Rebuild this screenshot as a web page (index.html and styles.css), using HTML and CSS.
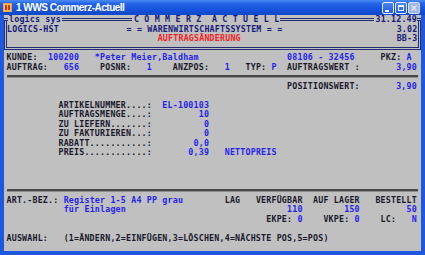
FILE: index.html
```html
<!DOCTYPE html>
<html lang="de">
<head>
  <meta charset="UTF-8" />
  <title>1 WWS Commerz-Actuell</title>
  <link rel="stylesheet" href="styles.css">
</head>
<body>

  <div class="window">

    <!-- Title bar -->
    <div class="titlebar">
      <svg class="app-icon" width="9" height="9" viewBox="0 0 9 9">
        <rect x="0" y="0" width="9" height="9" fill="#f4a43a" />
        <rect x="1" y="1" width="7" height="7" fill="#f6c35a" />
        <rect x="2" y="2" width="2" height="5" fill="#d8321e" />
        <rect x="5" y="2" width="2" height="5" fill="#d8321e" />
      </svg>
      <span class="title">1 WWS Commerz-Actuell</span>
      <div class="win-btns">
        <span class="win-btn">
          <svg width="12" height="12" viewBox="0 0 12 12"><rect x="3" y="8" width="4" height="2" fill="#fff" /></svg>
        </span>
        <span class="win-btn">
          <svg width="12" height="12" viewBox="0 0 12 12"><rect x="3.5" y="3.5" width="5" height="5" fill="none" stroke="#fff" /><rect x="3" y="3" width="6" height="2" fill="#fff" /></svg>
        </span>
        <span class="win-btn disabled">
          <svg width="12" height="12" viewBox="0 0 12 12"><path d="M3.5 3.5 L8.5 8.5 M8.5 3.5 L3.5 8.5" stroke="#e4e8f4" stroke-width="1.4" /></svg>
        </span>
      </div>
    </div>

    <!-- Terminal screen -->
    <div class="client">
      <div class="screen">

        <div class="head">
          <div class="head-top">
            <span class="rule rule-lead"></span>
            <span class="ht-text">logics sys</span>
            <span class="rule rule-mid"></span>
            <span class="ht-text">C O M M E R Z  A C T U E L L</span>
            <span class="rule rule-fill"></span>
            <span class="ht-text">31.12.49</span>
            <span class="rule rule-end"></span>
          </div>
          <div class="row n">LOGICS-HST             = = WARENWIRTSCHAFTSSYSTEM = =                      3.02</div>
          <div class="row n"><span class="r">                             AUFTRAGSÄNDERUNG</span>                              BB-3</div>
        </div>

        <div class="row body">KUNDE:  <span class="v">100200</span>   <span class="v">*Peter Meier,Baldham</span>                 <span class="v">08106 - 32456</span>     PKZ: <span class="v">A</span></div>
        <div class="row body">AUFTRAG:   <span class="v">656</span>    POSNR:   <span class="v">1</span>    ANZPOS:   <span class="v">1</span>   TYP: <span class="v">P</span>  AUFTRAGSWERT :       <span class="v">3,90</span></div>
        <div class="sep"></div>
        <div class="row body">                                                      POSITIONSWERT:       <span class="v">3,90</span></div>
        <div class="row body"></div>
        <div class="row body">          ARTIKELNUMMER....:  <span class="v">EL-100103</span></div>
        <div class="row body">          AUFTRAGSMENGE....:         <span class="v">10</span></div>
        <div class="row body">          ZU LIEFERN.......:          <span class="v">0</span></div>
        <div class="row body">          ZU FAKTURIEREN...:          <span class="v">0</span></div>
        <div class="row body">          RABATT...........:        <span class="v">0,0</span></div>
        <div class="row body">          PREIS............:       <span class="v">0,39</span>   <span class="v">NETTOPREIS</span></div>
        <div class="row body"></div>
        <div class="row body"></div>
        <div class="row body"></div>
        <div class="sep"></div>
        <div class="row body">ART.-BEZ.: <span class="v">Register 1-5 A4 PP grau</span>        LAG   VERFÜGBAR  AUF LAGER   BESTELLT</div>
        <div class="row body">           <span class="v">für Einlagen</span>                               <span class="v">110</span>        <span class="v">150</span>         <span class="v">50</span></div>
        <div class="row body">                                                  EKPE: <span class="v">0</span>    VKPE: <span class="v">0</span>    LC:   <span class="v">N</span></div>
        <div class="row body"></div>
        <div class="row body">AUSWAHL:   (1=ÄNDERN,2=EINFÜGEN,3=LÖSCHEN,4=NÄCHSTE POS,5=POS)</div>

      </div>
    </div>

  </div>

</body>
</html>
```

FILE: styles.css
```css
body {
  margin: 0;
  padding: 0;
  background: #1a55dd;
}

.window {
  width: 425px;
  height: 255px;
  box-sizing: border-box;
  padding: 0 4px 4px 4px;
  background: #1d58de;
  display: flex;
  flex-direction: column;
  overflow: hidden;
}

/* title bar */

.titlebar {
  height: 15px;
  margin: 0 -4px;
  padding: 0 5px 0 3px;
  display: flex;
  align-items: center;
  background: linear-gradient(to bottom, #4b8cf6 0%, #2362e6 25%, #1652dc 65%, #0f47c8 100%);
}

.app-icon {
  flex: none;
}

.title {
  margin-left: 4px;
  font-family: "Liberation Sans", Arial, sans-serif;
  font-weight: bold;
  font-size: 10px;
  letter-spacing: -0.5px;
  color: white;
  white-space: nowrap;
}

.win-btns {
  margin-left: auto;
  display: flex;
  gap: 1px;
}

.win-btn {
  width: 12px;
  height: 12px;
  box-sizing: border-box;
  border: 1px solid #e8eefc;
  border-radius: 2px;
  background: linear-gradient(to bottom, #4a86f4, #1f5ae4);
  display: flex;
}

.win-btn svg {
  margin: -1px;
}

.win-btn.disabled {
  background: #9fb6e8;
  border-color: #d4def4;
}

/* screen */

.client {
  flex: 1;
  background: #c0c0c0;
  overflow: hidden;
}

.screen {
  display: flow-root;
  font-family: "DejaVu Sans Mono", monospace;
  font-size: 8.3px;
  font-weight: bold;
  letter-spacing: 0.2px;
  line-height: 9.5px;
  color: #1a1a2c;
}

.row {
  height: 9.5px;
  white-space: pre;
}

.row.body {
  padding-left: 2.5px;
}

.n {
  color: #161c78;
}

.r {
  color: #f41e1e;
}

.v {
  color: #2424f2;
}

.head {
  display: flow-root;
  height: 27px;
  margin: 4.75px 0 3.25px 0;
  border: 3px double #242c70;
  border-top: none;
}

.head-top {
  height: 9.5px;
  margin: -4.75px -3px 0 -3px;
  display: flex;
  align-items: center;
  color: #161c78;
}

.ht-text {
  white-space: pre;
  flex: none;
}

.rule {
  height: 0;
  border-top: 3px double #242c70;
  flex: none;
}

.rule-lead {
  width: 4px;
  margin-right: 1px;
}

.rule-mid {
  width: 70px;
  margin: 0 2px 0 1px;
}

.rule-fill {
  flex: 1;
  margin: 0 1px;
}

.rule-end {
  width: 4px;
}

.sep {
  height: 9.5px;
  display: flex;
  align-items: center;
  padding: 0 3px;
}

.sep::after {
  content: "";
  flex: 1;
  height: 2px;
  background: #484848;
  border-bottom: 1px solid #8e8e8e;
}
```
